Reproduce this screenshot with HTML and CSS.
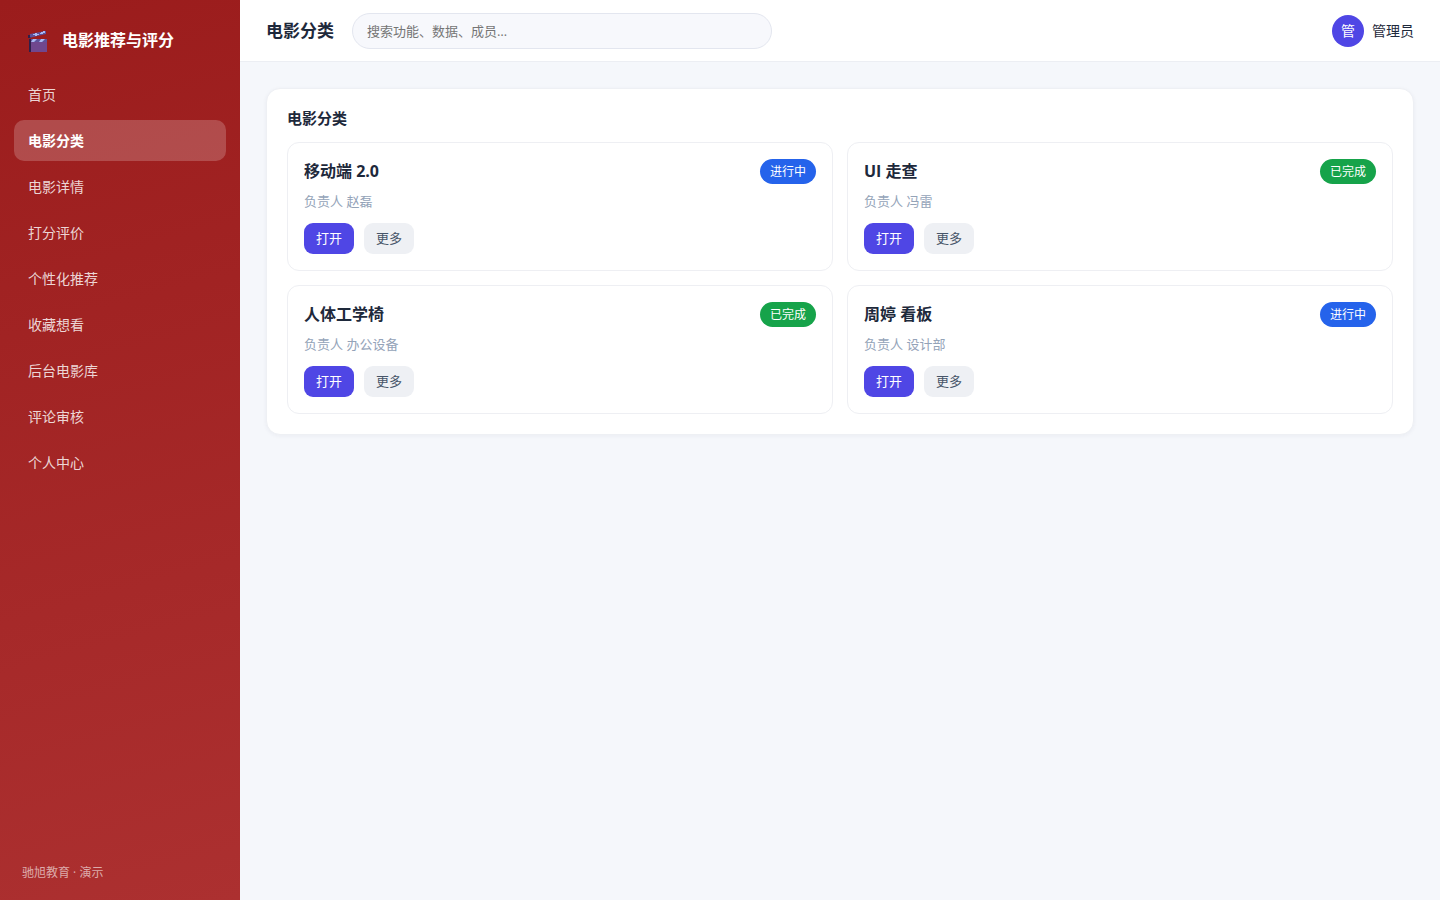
FILE: index.html
```html
<!DOCTYPE html>
<html lang="zh-CN">
<head>
    <meta charset="UTF-8">
    <meta name="viewport" content="width=device-width, initial-scale=1.0">
    <title>电影推荐与评分</title>
    <link rel="stylesheet" href="styles.css">
</head>
<body>
    <div class="layout">
        <aside class="sidebar">
            <div class="brand">
                <svg class="brand-icon" viewBox="0 -4 20 26" aria-hidden="true">
                    <path fill="#2f1f4a" d="M0 4h3v3H0z"/>
                    <path fill="#5d529b" d="M2 3 17 0h1v3L3 6.500H2z"/>
                    <path fill="#a9b9f2" d="M7 2h2v1h2v1H9v1H7V4H5V3h2zM13 1h2V0h2v2h-2v1h-3V2h1z"/>
                    <path fill="#70478e" d="M1 8h18v13H1z"/>
                    <path fill="#5d529b" d="M3 8h16v3H3z"/>
                    <path fill="#2f1f4a" d="M1 8h2v13H1z"/>
                    <path fill="#a9b9f2" d="M5 8h4l-3 3H3zM13 8h4l-3 3h-3z"/>
                </svg>
                <span>电影推荐与评分</span>
            </div>
            <nav class="nav">
                <a href="#">首页</a>
                <a href="#" class="active">电影分类</a>
                <a href="#">电影详情</a>
                <a href="#">打分评价</a>
                <a href="#">个性化推荐</a>
                <a href="#">收藏想看</a>
                <a href="#">后台电影库</a>
                <a href="#">评论审核</a>
                <a href="#">个人中心</a>
            </nav>
            <div class="sidebar-footer">驰旭教育 · 演示</div>
        </aside>

        <div class="main">
            <header class="topbar">
                <h1>电影分类</h1>
                <input type="search" class="search" placeholder="搜索功能、数据、成员…" aria-label="搜索">
                <div class="user">
                    <span class="avatar">管</span>
                    <span>管理员</span>
                </div>
            </header>

            <main class="content">
                <section class="panel">
                    <h2>电影分类</h2>
                    <div class="card-grid">
                        <div class="card">
                            <div class="card-head">
                                <h3>移动端 2.0</h3>
                                <span class="badge blue">进行中</span>
                            </div>
                            <p>负责人 赵磊</p>
                            <div class="button-group">
                                <button type="button" class="btn primary">打开</button>
                                <button type="button" class="btn">更多</button>
                            </div>
                        </div>
                        <div class="card">
                            <div class="card-head">
                                <h3>UI 走查</h3>
                                <span class="badge green">已完成</span>
                            </div>
                            <p>负责人 冯雷</p>
                            <div class="button-group">
                                <button type="button" class="btn primary">打开</button>
                                <button type="button" class="btn">更多</button>
                            </div>
                        </div>
                        <div class="card">
                            <div class="card-head">
                                <h3>人体工学椅</h3>
                                <span class="badge green">已完成</span>
                            </div>
                            <p>负责人 办公设备</p>
                            <div class="button-group">
                                <button type="button" class="btn primary">打开</button>
                                <button type="button" class="btn">更多</button>
                            </div>
                        </div>
                        <div class="card">
                            <div class="card-head">
                                <h3>周婷 看板</h3>
                                <span class="badge blue">进行中</span>
                            </div>
                            <p>负责人 设计部</p>
                            <div class="button-group">
                                <button type="button" class="btn primary">打开</button>
                                <button type="button" class="btn">更多</button>
                            </div>
                        </div>
                    </div>
                </section>
            </main>
        </div>
    </div>
</body>
</html>
```

FILE: styles.css
```css
* {
    margin: 0;
    padding: 0;
    box-sizing: border-box;
    font-family: "Open Sans", "Noto Sans CJK SC", sans-serif;
}

body {
    background-color: #f5f7fb;
    color: #1e293b;
    font-size: 14px;
    line-height: 19px;
}

.layout {
    display: flex;
    min-height: 100vh;
}

/* Sidebar */
.sidebar {
    width: 240px;
    flex-shrink: 0;
    display: flex;
    flex-direction: column;
    padding: 20px 14px 18px;
    background: linear-gradient(165deg, #9b1c1c, #ac3030);
    color: white;
}

.brand {
    display: flex;
    align-items: center;
    gap: 14px;
    height: 40px;
    padding: 0 14px;
    margin-bottom: 14px;
    font-size: 16px;
    font-weight: bold;
}

.brand-icon {
    width: 20px;
    height: 26px;
}

.nav {
    display: flex;
    flex-direction: column;
    gap: 5px;
}

.nav a {
    padding: 11px 14px;
    border-radius: 10px;
    color: rgba(255, 255, 255, 0.82);
    text-decoration: none;
}

.nav a.active {
    background-color: rgba(255, 255, 255, 0.2);
    color: white;
    font-weight: bold;
}

.sidebar-footer {
    margin-top: auto;
    padding: 0 8px;
    font-size: 12px;
    color: rgba(255, 255, 255, 0.6);
}

/* Top bar */
.main {
    flex: 1;
    min-width: 0;
}

.topbar {
    display: flex;
    align-items: center;
    gap: 18px;
    height: 62px;
    padding: 0 26px;
    background-color: white;
    border-bottom: 1px solid #eceef3;
}

.topbar h1 {
    font-size: 17px;
    white-space: nowrap;
}

.search {
    width: 420px;
    min-width: 0;
    height: 36px;
    padding: 0 14px;
    border: 1px solid #e3e6ef;
    border-radius: 18px;
    background-color: #f7f8fc;
    font-size: 13px;
    appearance: none;
}

.search::placeholder {
    color: #757575;
}

.user {
    display: flex;
    align-items: center;
    gap: 8px;
    margin-left: auto;
    white-space: nowrap;
}

.avatar {
    display: flex;
    align-items: center;
    justify-content: center;
    width: 32px;
    height: 32px;
    border-radius: 50%;
    background-color: #4f46e5;
    color: white;
}

/* Content */
.content {
    padding: 26px;
}

.panel {
    padding: 20px;
    background-color: white;
    border: 1px solid #eef0f4;
    border-radius: 14px;
    box-shadow: 0 1px 4px rgba(30, 41, 80, 0.05);
}

.panel h2 {
    margin-bottom: 14px;
    font-size: 15px;
}

.card-grid {
    display: grid;
    grid-template-columns: repeat(2, 1fr);
    gap: 14px;
}

.card {
    padding: 16px;
    border: 1px solid #eeeff3;
    border-radius: 12px;
}

.card-head {
    display: flex;
    align-items: center;
    justify-content: space-between;
    margin-bottom: 8px;
}

.card h3 {
    font-size: 16px;
}

.card p {
    margin-bottom: 12px;
    font-size: 13px;
    color: #94a3b8;
}

.badge {
    padding: 3px 10px;
    border-radius: 13px;
    color: white;
    font-size: 12px;
}

.badge.blue {
    background-color: #2563eb;
}

.badge.green {
    background-color: #16a34a;
}

.button-group {
    display: flex;
    gap: 10px;
}

.btn {
    padding: 6px 12px;
    border: none;
    border-radius: 9px;
    background-color: #eef0f4;
    color: #475569;
    font-size: 13px;
    line-height: 19px;
    cursor: pointer;
}

.btn.primary {
    background-color: #4f46e5;
    color: white;
}
```
